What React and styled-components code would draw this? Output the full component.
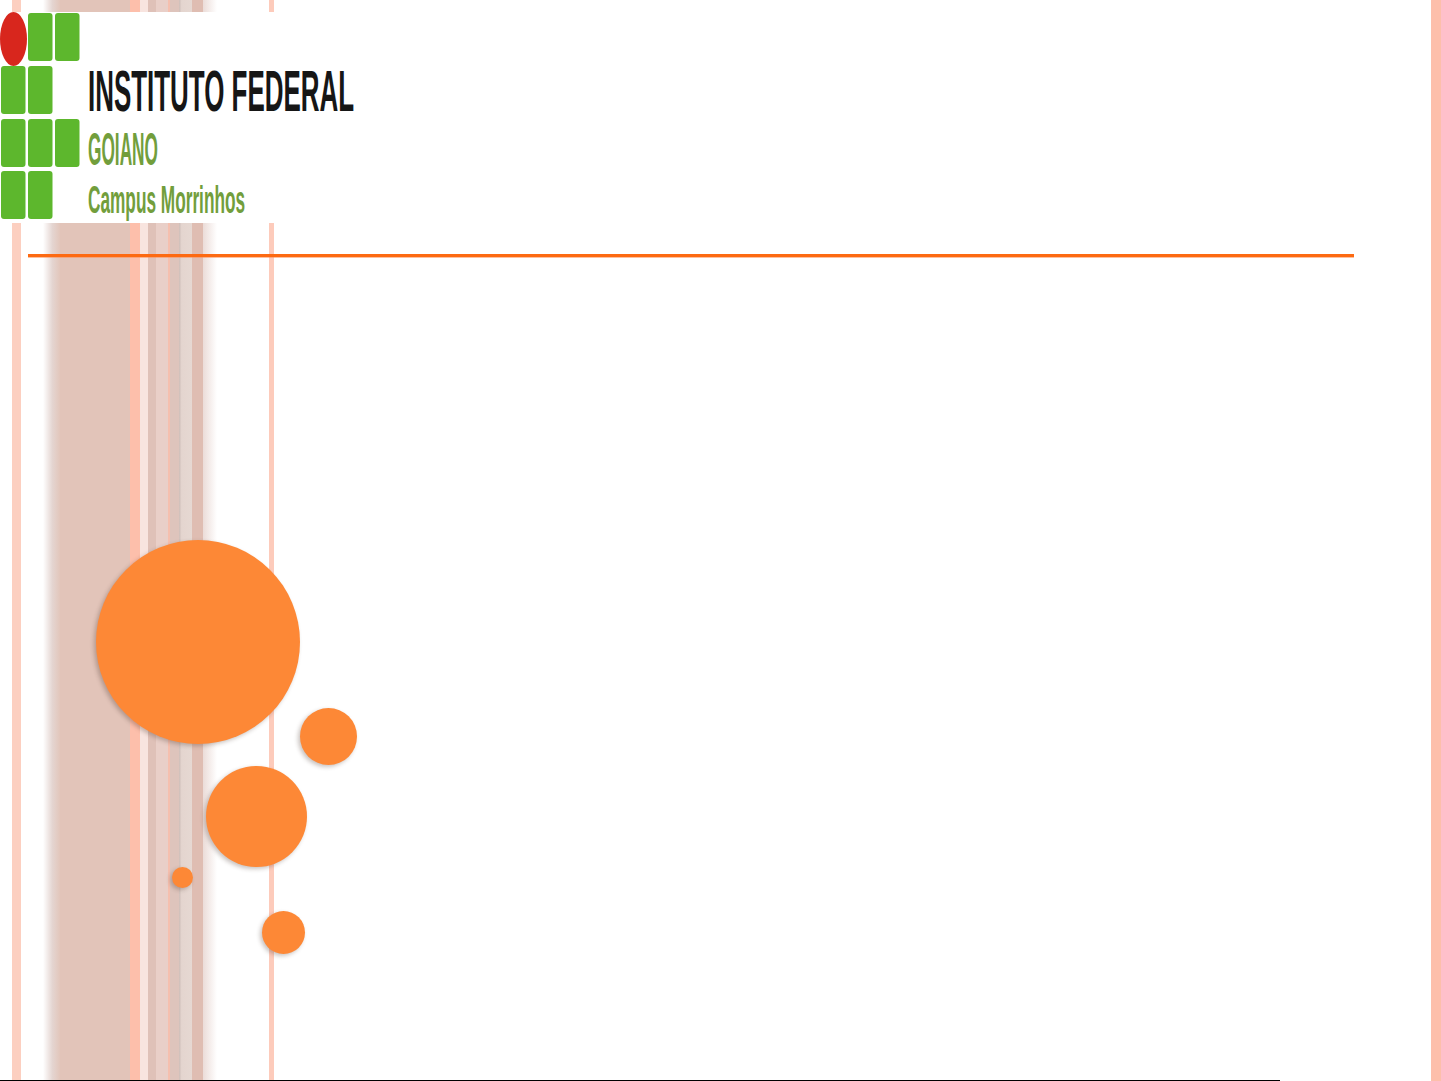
import React from "react";
import styled, { createGlobalStyle } from "styled-components";

const Global = createGlobalStyle`
  html, body { margin: 0; padding: 0; background: #ffffff; }
  body { font-family: "Liberation Sans", Arial, sans-serif; overflow: hidden; }
`;

const Slide = styled.div`
  position: relative;
  width: 1441px;
  height: 1081px;
  overflow: hidden;
  background: #ffffff;
`;

const StripeLayer = styled.div`
  position: absolute;
  inset: 0;
  display: flex;
  z-index: 0;
`;

const Stripe = styled.div`
  flex: ${(p) => (p.$grow ? "1 1 auto" : `0 0 ${p.$w}px`)};
  background: ${(p) => p.$bg || "transparent"};
`;

const Content = styled.div`
  position: relative;
  z-index: 1;
  height: 100%;
  display: flex;
  flex-direction: column;
  padding-top: 12px;
  box-sizing: border-box;
`;

const Logo = styled.div`
  width: 355px;
  height: 211px;
  background: #ffffff;
  display: flex;
  gap: 8px;
`;

const Mark = styled.svg`
  flex: 0 0 80px;
  width: 80px;
  height: 208px;
  display: block;
`;

const Words = styled.div`
  display: flex;
  flex-direction: column;
  padding-top: 50px;
  white-space: nowrap;
`;

const Word = styled.div`
  font-family: "Liberation Sans", Arial, sans-serif;
  font-weight: 700;
  line-height: 1;
  height: ${(p) => p.$size}px;
  font-size: ${(p) => p.$size}px;
  color: ${(p) => p.$color};
  margin-top: ${(p) => p.$mt || 0}px;
  transform: scaleX(${(p) => p.$sx});
  transform-origin: left top;
`;

const Rule = styled.div`
  margin-top: 31px;
  margin-left: 28px;
  width: 1326px;
  height: 3px;
  background: #fd6a12;
  box-shadow: 0 1px 0 rgba(253, 140, 80, 0.55);
`;

const Spacer = styled.div`
  flex: 1 1 auto;
`;

const BottomLine = styled.div`
  height: 1px;
  width: 1280px;
  background: #000000;
`;

const Dot = styled.div`
  position: absolute;
  border-radius: 50%;
  background: #fd8836;
  box-shadow: -2px 2px 4px rgba(60, 40, 30, 0.28);
  z-index: 2;
`;

const stripes = [
  { w: 12 },
  { w: 9, bg: "#fccfc0" },
  { w: 22 },
  { w: 17, bg: "linear-gradient(to right, rgba(226,210,205,0) 0%, #e4d5d1 55%, #e2c6bb 100%)" },
  { w: 70, bg: "#e2c4b9" },
  { w: 10, bg: "#fdbfab" },
  { w: 8, bg: "#f8e4df" },
  { w: 8, bg: "#dfc1b8" },
  { w: 12, bg: "#e9cfc8" },
  { w: 2, bg: "#f5bfae" },
  { w: 9, bg: "#dec4bc" },
  { w: 13, bg: "linear-gradient(to right, #cdbdb8 0%, #e4d5cf 20%, #e6d8d2 100%)" },
  { w: 11, bg: "#dfbdb2" },
  { w: 14, bg: "linear-gradient(to right, #ebdcd8 0%, rgba(255,255,255,0) 100%)" },
  { w: 52 },
  { w: 5, bg: "#fdcbbb" },
  { grow: true },
  { w: 10, bg: "#fdbfab" },
];

const dots = [
  { x: 96, y: 540, d: 204 },
  { x: 300, y: 708, d: 57 },
  { x: 206, y: 766, d: 101 },
  { x: 172, y: 867, d: 21 },
  { x: 262, y: 911, d: 43 },
];

const squares = [
  [28, 1], [55, 1],
  [1, 54], [28, 54],
  [1, 107], [28, 107], [55, 107],
  [1, 159], [28, 159],
];

export default function App() {
  return (
    <>
      <Global />
      <Slide>
        <StripeLayer>
          {stripes.map((s, i) => (
            <Stripe key={i} $w={s.w} $bg={s.bg} $grow={s.grow} />
          ))}
        </StripeLayer>
        <Content>
          <Logo>
            <Mark viewBox="0 0 80 208">
              {squares.map(([x, y], i) => (
                <rect key={i} x={x} y={y} width="24.5" height="48" rx="3" fill="#5db72d" />
              ))}
              <ellipse cx="13.5" cy="27" rx="13.5" ry="27" fill="#d8261d" />
            </Mark>
            <Words>
              <Word $size={58} $color="#161616" $sx={0.447}>INSTITUTO FEDERAL</Word>
              <Word $size={46} $color="#729e3c" $sx={0.375} $mt={6}>GOIANO</Word>
              <Word $size={39} $color="#729e3c" $sx={0.442} $mt={8}>Campus Morrinhos</Word>
            </Words>
          </Logo>
          <Rule />
          <Spacer />
          <BottomLine />
        </Content>
        {dots.map((c, i) => (
          <Dot key={i} style={{ left: c.x, top: c.y, width: c.d, height: c.d }} />
        ))}
      </Slide>
    </>
  );
}
